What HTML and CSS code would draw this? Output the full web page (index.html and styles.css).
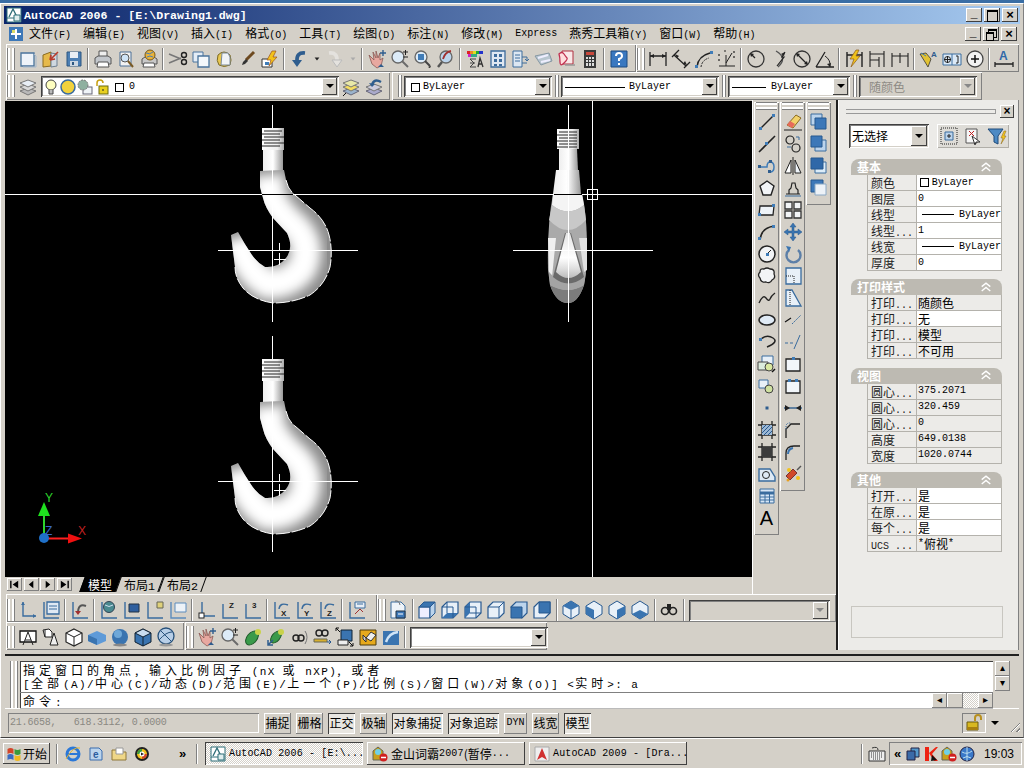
FILE: index.html
```html
<!DOCTYPE html>
<html lang="zh">
<head>
<meta charset="utf-8">
<title>AutoCAD 2006</title>
<link rel="stylesheet" href="styles.css">
</head>
<body>
<svg class="defs" width="0" height="0">
<defs>
<linearGradient id="thr" x1="0" y1="0" x2="1" y2="0"><stop offset="0" stop-color="#fff"/><stop offset=".7" stop-color="#eee"/><stop offset="1" stop-color="#aaa"/></linearGradient>
<linearGradient id="neck" x1="0" y1="0" x2="1" y2="0"><stop offset="0" stop-color="#eee"/><stop offset=".5" stop-color="#fff"/><stop offset="1" stop-color="#999"/></linearGradient>
<linearGradient id="tip" x1="0" y1="0" x2="0" y2="1"><stop offset="0" stop-color="#e4e4e4"/><stop offset=".55" stop-color="#fff"/><stop offset=".8" stop-color="#ddd"/><stop offset="1" stop-color="#bbb"/></linearGradient>
<filter id="bl" x="-30%" y="-30%" width="160%" height="160%"><feGaussianBlur stdDeviation="6"/></filter>
<filter id="bl2" x="-10%" y="-10%" width="120%" height="120%"><feGaussianBlur stdDeviation=".4"/></filter>
<clipPath id="hookclip"><path d="M260 171L284 170L286 180Q288 190 295 195L310 208Q325 219 329 235Q333 250 330 267Q325 285 310 295Q293 303 273 303Q253 300 243 288Q235 278 235 267L231 235L238 232Q244 243 250 252Q256 262 265 267Q278 268 286 258Q294 248 287 233L273 218Q265 207 263 198L260 187Z"/></clipPath>
<g id="hook">
<rect x="262" y="128" width="22" height="22" fill="url(#thr)"/>
<path d="M264 131h18M262 134h18M264 137h20M262 140h18M264 143h20M262 146h18" stroke="#222" stroke-width="1"/>
<rect x="263" y="150" width="20" height="21" fill="url(#neck)"/>
<g clip-path="url(#hookclip)">
<rect x="225" y="165" width="112" height="142" fill="#8c8c8c"/>
<path d="M268 175L270 197Q280 215 296 228Q312 246 302 268Q290 284 268 284Q246 272 238 238" fill="none" stroke="#fff" stroke-width="30" filter="url(#bl)"/>
</g>
<path d="M286 180Q288 190 295 195L310 208Q325 219 329 235Q333 250 330 267Q325 285 310 295Q293 303 273 303Q253 300 243 288Q235 278 235 267" fill="none" stroke="#fff" stroke-dasharray="14 2"/>
</g>
<g id="hookfront">
<rect x="557" y="129" width="22" height="20" fill="url(#thr)"/>
<path d="M559 132h18M557 135h20M559 138h18M557 141h20M559 144h18M557 147h20" stroke="#222"/>
<path d="M559 149L577 149L578 170L559 170Z" fill="url(#neck)"/>
<path d="M556 170H579L581 194H553Z" fill="url(#neck)"/>
<g filter="url(#bl2)">
<path d="M553 194H582Q587 215 587 250Q587 270 584 285Q578 303 568 303Q556 303 550 285L548 270Q547 225 553 194Z" fill="#aaa"/>
<path d="M552 205Q568 218 584 205L582 194H553Z" fill="#f4f4f4"/>
<path d="M549 220Q568 240 586 220L584 205Q568 218 552 205Z" fill="#c8c8c8"/>
<path d="M548 238L556 238L552 277L549 272Z" fill="#efefef"/>
<path d="M587 238L579 238L584 272L587 270Z" fill="#e2e2e2"/>
<path d="M550 285Q568 295 584 285Q578 303 568 303Q556 303 550 285Z" fill="#7c7c7c"/>
<path d="M549 272Q568 295 586 272L584 285Q568 295 550 285Z" fill="#a4a4a4"/>
</g>
<path d="M565 233H571L584 277Q568 290 553 277Z" fill="#6a6a6a"/>
<path d="M566 233H570L581 272Q568 284 556 272Z" fill="url(#tip)"/>
</g>
<symbol id="chev" viewBox="0 0 14 12"><path d="M2 5l5-4 5 4M2 10l5-4 5 4" fill="none" stroke="#fff" stroke-width="1.600"/></symbol>
<symbol id="new" viewBox="0 0 20 20"><path d="M3 4h13v13H3z" fill="#eef3f9" stroke="#49739c" stroke-width="1.3"/><path d="M16 5l2 2v11H5" fill="none" stroke="#a5b8cc"/></symbol>
<symbol id="open" viewBox="0 0 20 20"><path d="M2 6l8-3v14l-8 1z" fill="#e6b94a" stroke="#8a6a20"/><path d="M10 4l6 1v12l-6 1z" fill="#cfd8e0" stroke="#6d7f90"/><path d="M17 3l-8 8M9 11l1-5M9 11l5-1" stroke="#b83a2a" stroke-width="1.6" fill="none"/></symbol>
<symbol id="save" viewBox="0 0 20 20"><path d="M3 3h14v14H3z" fill="#4c7fb4" stroke="#2d5780"/><path d="M6 3h8v6H6z" fill="#e8eef5"/><path d="M6 12h8v5H6z" fill="#cdd7e2"/><path d="M8 13h2v3H8z" fill="#2d5780"/></symbol>
<symbol id="print" viewBox="0 0 20 20"><path d="M6 2h8v6H6z" fill="#eee" stroke="#555"/><path d="M2 9l3-2h10l3 2v6H2z" fill="#c3c7cc" stroke="#555"/><path d="M5 13h10l1 5H4z" fill="#fff" stroke="#555"/></symbol>
<symbol id="preview" viewBox="0 0 20 20"><path d="M4 3h11v14H4z" fill="#f2f2f2" stroke="#4a6f96"/><circle cx="9" cy="9" r="4" fill="#cfe4f7" stroke="#555"/><path d="M12 12l5 6" stroke="#7a5a25" stroke-width="2"/></symbol>
<symbol id="publish" viewBox="0 0 20 20"><path d="M3 10l3-2h9l3 2v5H3z" fill="#c8c8c8" stroke="#555"/><path d="M5 14h10l1 4H4z" fill="#fff" stroke="#555"/><circle cx="11" cy="6" r="5" fill="#e8b23a" stroke="#7c5a14"/><path d="M7 4q4 2 7-1M8 8q3-2 6 0" stroke="#4a7fb4" fill="none"/></symbol>
<symbol id="cut" viewBox="0 0 20 20"><path d="M1 5l12 5M1 14l12-5" stroke="#777" stroke-width="1.5"/><circle cx="16" cy="6" r="2.5" fill="none" stroke="#222" stroke-width="1.4"/><circle cx="16" cy="13" r="2.5" fill="none" stroke="#222" stroke-width="1.4"/></symbol>
<symbol id="copy" viewBox="0 0 20 20"><path d="M2 3h10v10H2z" fill="#e4edf6" stroke="#49739c"/><path d="M7 7h11v11H7z" fill="#f4f8fb" stroke="#49739c" stroke-width="1.3"/></symbol>
<symbol id="paste" viewBox="0 0 20 20"><path d="M4 6q-2 6 1 10q5 3 11 0q2-5 0-10q-6-6-12 0z" fill="#e9c74f" stroke="#7b6a28"/><path d="M8 4h6l2 4v8H7z" fill="#f1f4f7" stroke="#7a8a9a"/></symbol>
<symbol id="brush" viewBox="0 0 20 20"><path d="M17 3L9 11" stroke="#6e4a20" stroke-width="3"/><path d="M9 10q-3 2-4 6q4-1 6-4z" fill="#333"/></symbol>
<symbol id="match" viewBox="0 0 20 20"><path d="M2 10h10v8H2z" fill="#fff" stroke="#333"/><path d="M5 13h4v3H5z" fill="#3f7cb8"/><path d="M12 2L7 11h4l-2 6 8-9h-4l3-6z" fill="#f2c21c" stroke="#9a5020" stroke-width=".7"/></symbol>
<symbol id="undo" viewBox="0 0 20 20"><path d="M16 4Q7 3 8 13" fill="none" stroke="#2f5d8e" stroke-width="3.6"/><path d="M3 11l5 7 5-7z" fill="#2f5d8e"/></symbol>
<symbol id="redo" viewBox="0 0 20 20"><path d="M4 4Q13 3 12 13" fill="none" stroke="#e4e2de" stroke-width="3.6"/><path d="M7 11l5 7 5-7z" fill="#e4e2de" stroke="#bbb"/></symbol>
<symbol id="down" viewBox="0 0 20 20"><path d="M7 8h6l-3 4z" fill="#222"/></symbol>
<symbol id="downg" viewBox="0 0 20 20"><path d="M7 8h6l-3 4z" fill="#aaa"/></symbol>
<symbol id="pan" viewBox="0 0 20 20"><path d="M2 6l5 5-1-8 3 6V2l2 7 2-5v7l3-2-2 8-4 2-5-4z" fill="#e8a8a0" stroke="#8a5a55" stroke-width=".8"/><path d="M13 4h6M16 1v6" stroke="#2f5d8e" stroke-width="1.4"/><path d="M11 18l3-3 3 3z" fill="#2f5d8e"/></symbol>
<symbol id="zrt" viewBox="0 0 20 20"><circle cx="8" cy="8" r="6" fill="#dcebf8" stroke="#666" stroke-width="1.3"/><path d="M12 12l6 6" stroke="#6b6b6b" stroke-width="2"/><path d="M13 3h5M15.5 1v5M13 8h5" stroke="#222"/></symbol>
<symbol id="zw" viewBox="0 0 20 20"><circle cx="8" cy="8" r="6" fill="#dcebf8" stroke="#666" stroke-width="1.3"/><rect x="5" y="5" width="6" height="6" fill="#3f7cb8"/><path d="M12 12l5 5" stroke="#444" stroke-width="2"/><path d="M15 18l3-1-1 2z" fill="#111"/></symbol>
<symbol id="zp" viewBox="0 0 20 20"><circle cx="10" cy="8" r="6" fill="#bcd4ec" stroke="#666" stroke-width="1.3"/><path d="M15 2Q9 3 7 10" stroke="#a03030" stroke-width="1.8" fill="none"/><path d="M6 13l-4 5" stroke="#555" stroke-width="2.4"/></symbol>
<symbol id="col" viewBox="0 0 20 20"><path d="M2 2h3v3H2z" fill="#d22"/><path d="M5 2h3v3H5z" fill="#e82"/><path d="M8 2h3v3H8z" fill="#dd2"/><path d="M11 2h3v3h-3z" fill="#2a3"/><path d="M14 2h4v3h-4z" fill="#23c"/><path d="M3 5h3v3H3z" fill="#c2c"/><path d="M6 5h3v3H6zM9 5h3v3H9z" fill="#3a8"/><path d="M5 10h6M5 14h5M5 18h6M5 10l4 4-4 4" stroke="#444" fill="none"/><path d="M13 18l2-9 3 9M14 15h3" stroke="#333" fill="none" stroke-width="1.3"/></symbol>
<symbol id="grd" viewBox="0 0 20 20"><path d="M3 2h14v16H3z" fill="#dfe8f2" stroke="#3d6c9c" stroke-width="1.3"/><path d="M6 5h3v3H6zM11 5h3v3h-3zM6 10h3v3H6zM11 10h3v3h-3zM6 15h3v2H6zM11 15h3v2h-3z" fill="#3d6c9c"/></symbol>
<symbol id="dc" viewBox="0 0 20 20"><path d="M2 2h9v16H2z" fill="#dce7f2" stroke="#3d6c9c"/><path d="M4 6h5M4 9h5M4 12h5" stroke="#3d6c9c"/><path d="M11 8h5v4M16 12l-2-2M16 12l2-2M11 14h5" stroke="#3d6c9c" fill="none"/></symbol>
<symbol id="tool" viewBox="0 0 20 20"><path d="M1 7l6 9 11-4-3-8z" fill="#b8c6d0" stroke="#8798a4"/><path d="M4 9l10-3M7 13l9-2" stroke="#eef" stroke-width="2"/></symbol>
<symbol id="sheet" viewBox="0 0 20 20"><path d="M5 2h11v13H5z" fill="#f8e8e8" stroke="#b03040"/><path d="M2 5q3-3 5 0t3 4-3 5-4-1-1-8z" fill="#fdd" stroke="#c03050" stroke-width="1.3"/><path d="M8 16h10" stroke="#999" stroke-width="1.5"/></symbol>
<symbol id="calc" viewBox="0 0 20 20"><path d="M4 1h12v18H4z" fill="#3a3a3a"/><path d="M6 3h8v3H6z" fill="#c9483c"/><path d="M6 8h2v2H6zM9 8h2v2H9zM12 8h2v2h-2zM6 11h2v2H6zM9 11h2v2H9zM12 11h2v2h-2zM6 14h2v3H6zM9 14h2v3H9zM12 14h2v3h-2z" fill="#ddd"/></symbol>
<symbol id="help" viewBox="0 0 20 20"><path d="M2 2h16v16H2z" fill="#3a78c0" stroke="#1d4a80"/><path d="M7 7q0-3 3-3t3 3q0 2-3 3v2" fill="none" stroke="#fff" stroke-width="2"/><path d="M9 14h2v2H9z" fill="#fff"/></symbol>
<symbol id="dl" viewBox="0 0 20 20"><path d="M2 3v14M18 3v14M2 7h16" stroke="#222" stroke-width="1.3" fill="none"/><path d="M2 7l4-2v4zM18 7l-4-2v4z" fill="#222"/></symbol>
<symbol id="da" viewBox="0 0 20 20"><path d="M1 8L8 1M13 19l6-6M3 6l12 11" stroke="#222" stroke-width="1.3"/><path d="M4 5l2 4 2-2zM16 16l-4-1 2-3z" fill="#222"/></symbol>
<symbol id="darc" viewBox="0 0 20 20"><path d="M3 18Q4 7 16 4" fill="none" stroke="#222" stroke-width="1.4"/><path d="M7 18Q8 11 15 9" fill="none" stroke="#2a2a2a" stroke-dasharray="2 1"/><rect x="1" y="16" width="3" height="3" fill="#3f7cb8"/><rect x="16" y="2" width="3" height="3" fill="#3f7cb8"/></symbol>
<symbol id="dord" viewBox="0 0 20 20"><path d="M2 17h16M9 6v11M15 4l-6 10" stroke="#222" fill="none"/><path d="M2 5v2M2 10v2M17 2v2M17 7v2M7 2h2" stroke="#222" stroke-width="1.2"/></symbol>
<symbol id="drad" viewBox="0 0 20 20"><circle cx="10" cy="10" r="8" fill="none" stroke="#333" stroke-width="1.3"/><path d="M9 9L5 5" stroke="#222" stroke-width="1.3"/><path d="M4 4l4 1-3 3z" fill="#222"/></symbol>
<symbol id="djog" viewBox="0 0 20 20"><path d="M7 2Q19 9 9 18" fill="none" stroke="#555" stroke-width="1.3"/><path d="M16 3l-3 5h2l-7 9" stroke="#222" fill="none" stroke-width="1.2"/><path d="M16 3l-1 4-3-2z" fill="#222"/></symbol>
<symbol id="ddia" viewBox="0 0 20 20"><circle cx="10" cy="10" r="8" fill="none" stroke="#333" stroke-width="1.3"/><path d="M5 5l10 10" stroke="#222" stroke-width="1.3"/><path d="M4 4l4 1-3 3zM16 16l-4-1 3-3z" fill="#222"/></symbol>
<symbol id="dang" viewBox="0 0 20 20"><path d="M1 18h18M1 18L10 3" stroke="#222" stroke-width="1.3"/><path d="M10 7Q16 11 15 18" fill="none" stroke="#222"/><path d="M15 18l-3-3 4-1z" fill="#222"/></symbol>
<symbol id="dq" viewBox="0 0 20 20"><path d="M3 3v15M18 3v15M3 6h15" stroke="#222" stroke-width="1.4"/><path d="M12 1L6 10h4l-3 8 9-11h-4l3-6z" fill="#efc21c" stroke="#8d5a1e" stroke-width=".7"/></symbol>
<symbol id="dbase" viewBox="0 0 20 20"><path d="M3 2v16M17 2v16M12 8v10M3 5h14M3 11h9" stroke="#222" fill="none" stroke-width="1.1"/></symbol>
<symbol id="dcon" viewBox="0 0 20 20"><path d="M2 4v14M10 4v10M18 4v14M2 7h16" stroke="#222" fill="none" stroke-width="1.1"/></symbol>
<symbol id="lead" viewBox="0 0 20 20"><path d="M1 5l5 8 3 5 3-8-5-6z" fill="#e2c233" stroke="#333" stroke-width=".8"/><path d="M2 4l5 3" stroke="#3f7cb8"/><text x="12" y="8" font-size="8" font-family="Liberation Sans" font-weight="700" fill="#2f5d8e">A</text></symbol>
<symbol id="tol" viewBox="0 0 20 20"><path d="M1 5h18v11H1z" fill="#dbe9f6" stroke="#3a6c9e"/><path d="M10 5v11" stroke="#3a6c9e"/><circle cx="5.5" cy="10.500" r="3" fill="none" stroke="#222"/><path d="M5.500 7v7M2 10.500h7" stroke="#222"/><path d="M14 7h2v7h-2" fill="none" stroke="#222"/></symbol>
<symbol id="center" viewBox="0 0 20 20"><circle cx="10" cy="10" r="8" fill="#f2f2f2" stroke="#444" stroke-width="1.3"/><path d="M10 6v8M6 10h8" stroke="#111" stroke-width="1.5"/></symbol>
<symbol id="dstyle" viewBox="0 0 20 20"><path d="M1 18V13M19 18v-5M1 15h18" stroke="#222" stroke-width="1.3"/><text x="5" y="11" font-size="12" font-family="Liberation Sans" font-weight="700" fill="#3068a8">A</text></symbol>
<symbol id="layers" viewBox="0 0 20 20"><path d="M10 11l8 3-8 4-8-4z" fill="#b9b9b9" stroke="#777"/><path d="M10 7l8 3-8 4-8-4z" fill="#d9d9d9" stroke="#777"/><path d="M10 3l8 3-8 4-8-4z" fill="#e8eef5" stroke="#777"/></symbol>
<symbol id="bulb" viewBox="0 0 14 16"><circle cx="7" cy="6" r="5" fill="#ffffc0" stroke="#444"/><path d="M5 11v4h4v-4" fill="#bbb" stroke="#444"/></symbol>
<symbol id="sun" viewBox="0 0 16 16"><circle cx="8" cy="8" r="7" fill="#f2d23c" stroke="#3a6c9e" stroke-width="1.5"/></symbol>
<symbol id="gear" viewBox="0 0 16 16"><rect x="6" y="8" width="9" height="7" fill="#f0f4f8" stroke="#667"/><circle cx="6" cy="6" r="5" fill="#8fb0a0" stroke="#777" stroke-dasharray="2 1"/></symbol>
<symbol id="lock" viewBox="0 0 16 16"><path d="M3 7V4q0-3 3-3t3 3" fill="none" stroke="#c8a010" stroke-width="1.5"/><rect x="5" y="7" width="9" height="8" fill="#e8d020" stroke="#6a6a10"/><path d="M9 10v2" stroke="#222"/></symbol>
<symbol id="layprev" viewBox="0 0 20 20"><path d="M10 11l8 3-8 4-8-4z" fill="#9ab3cc" stroke="#667"/><path d="M10 7l8 3-8 4-8-4z" fill="#f4dc60" stroke="#777"/><path d="M10 3l8 3-8 4-8-4z" fill="#e8e8a8" stroke="#777"/><path d="M2 19l3-3" stroke="#111"/></symbol>
<symbol id="layun" viewBox="0 0 20 20"><path d="M10 11l8 3-8 4-8-4z" fill="#aac" stroke="#667"/><path d="M10 7l8 3-8 4-8-4z" fill="#ccd" stroke="#777"/><path d="M17 5Q10 1 8 8" fill="none" stroke="#2f5d8e" stroke-width="2.5"/><path d="M5 6l3 4 3-3z" fill="#2f5d8e"/></symbol>
<symbol id="u1" viewBox="0 0 20 20"><path d="M5 2v14h13" fill="none" stroke="#3a6c9e" stroke-width="1.4"/><path d="M3 5l2-3 2 3zM15 14l3 2-3 2z" fill="#3a6c9e"/></symbol>
<symbol id="u2" viewBox="0 0 20 20"><path d="M3 2v16h15" fill="none" stroke="#3a6c9e" stroke-width="1.4"/><path d="M6 2h12v12H6z" fill="#dfe9f4" stroke="#3a6c9e" stroke-width="1.3"/><path d="M8 6h8M8 9h8" stroke="#3a6c9e"/></symbol>
<symbol id="u3" viewBox="0 0 20 20"><path d="M3 2v16h15" fill="none" stroke="#3a6c9e" stroke-width="1.4"/><path d="M16 6Q8 3 8 13" stroke="#555" fill="none" stroke-width="2"/><path d="M5 11l3 4 3-4z" fill="#a03030"/></symbol>
<symbol id="u4" viewBox="0 0 20 20"><path d="M3 2v16h15" fill="none" stroke="#3a6c9e" stroke-width="1.4"/><circle cx="10" cy="7" r="5.500" fill="#4a8a90" stroke="#345"/><path d="M6 5q4 3 8 0" stroke="#cde" fill="none"/></symbol>
<symbol id="u5" viewBox="0 0 20 20"><path d="M3 2v16h15" fill="none" stroke="#3a6c9e" stroke-width="1.4"/><path d="M7 4h10v8H7z" fill="#2f5f9e" stroke="#234"/></symbol>
<symbol id="u6" viewBox="0 0 20 20"><path d="M3 2v16h15" fill="none" stroke="#3a6c9e" stroke-width="1.4"/><path d="M12 2h6v6h-6z" fill="#dfd17a" stroke="#665"/></symbol>
<symbol id="u7" viewBox="0 0 20 20"><path d="M3 2v16h15" fill="none" stroke="#5c8cbc" stroke-width="1.4"/><path d="M7 3h11v9H7z" fill="#edf2f7" stroke="#5c8cbc"/></symbol>
<symbol id="u8" viewBox="0 0 20 20"><path d="M5 2v14h13" fill="none" stroke="#3a6c9e" stroke-width="1.4"/><rect x="2" y="13" width="5" height="5" fill="#fff" stroke="#222"/></symbol>
<symbol id="u9" viewBox="0 0 20 20"><path d="M3 4v14h15" fill="none" stroke="#3a6c9e" stroke-width="1.4"/><text x="9" y="8" font-size="8" font-family="Liberation Sans" font-weight="700" fill="#222">Z</text></symbol>
<symbol id="u10" viewBox="0 0 20 20"><path d="M3 4v14h15" fill="none" stroke="#3a6c9e" stroke-width="1.4"/><text x="9" y="8" font-size="8" font-family="Liberation Sans" font-weight="700" fill="#222">3</text></symbol>
<symbol id="ux" viewBox="0 0 20 20"><path d="M3 2v16h15" fill="none" stroke="#3a6c9e" stroke-width="1.4"/><path d="M16 5Q8 2 7 9" stroke="#3a6c9e" fill="none" stroke-width="1.4"/><text x="9" y="16" font-size="8" font-family="Liberation Sans" font-weight="700" fill="#222">X</text></symbol>
<symbol id="uy" viewBox="0 0 20 20"><path d="M3 2v16h15" fill="none" stroke="#3a6c9e" stroke-width="1.4"/><path d="M16 5Q8 2 7 9" stroke="#3a6c9e" fill="none" stroke-width="1.4"/><text x="9" y="16" font-size="8" font-family="Liberation Sans" font-weight="700" fill="#222">Y</text></symbol>
<symbol id="uz" viewBox="0 0 20 20"><path d="M3 2v16h15" fill="none" stroke="#3a6c9e" stroke-width="1.4"/><path d="M16 5Q8 2 7 9" stroke="#3a6c9e" fill="none" stroke-width="1.4"/><text x="9" y="16" font-size="8" font-family="Liberation Sans" font-weight="700" fill="#222">Z</text></symbol>
<symbol id="umgr" viewBox="0 0 20 20"><path d="M3 2v16h15" fill="none" stroke="#3a6c9e" stroke-width="1.4"/><path d="M8 2h10v6H8z" fill="#e8eef5" stroke="#3a6c9e"/><path d="M10 4h6" stroke="#3a6c9e"/><path d="M8 14l5-5 3 3" stroke="#a03030" fill="none"/></symbol>
<symbol id="vmgr" viewBox="0 0 20 20"><path d="M3 2h10l4 4v12H3z" fill="#eef3f8" stroke="#3a6c9e"/><path d="M7 1q4-1 5 4" stroke="#777" fill="none"/><path d="M8 11h9v7H8z" fill="#3d78b8" stroke="#234"/><path d="M10 14h5" stroke="#fff"/></symbol>
<symbol id="vtop" viewBox="0 0 20 20"><path d="M2 7h11v11H2z" fill="#eef" stroke="#27588f" stroke-width="1.2"/><path d="M2 7l5-5h11l-5 5z" fill="#3a74b0" stroke="#27588f"/><path d="M13 7l5-5v11l-5 5z" fill="#bcd4ec" stroke="#27588f"/></symbol>
<symbol id="vbot" viewBox="0 0 20 20"><path d="M2 7l5-5h11v11l-5 5H2z" fill="#e8f0f8" stroke="#27588f" stroke-width="1.2"/><path d="M2 18l5-5h11l-5 5z" fill="#3a74b0"/><path d="M7 2v11" stroke="#27588f"/><path d="M2 7h11v11" stroke="#27588f" fill="none"/></symbol>
<symbol id="vl" viewBox="0 0 20 20"><path d="M2 7l5-5h11v11l-5 5H2z" fill="#e8f0f8" stroke="#27588f" stroke-width="1.2"/><path d="M2 7l5-5v11l-5 5z" fill="#3a74b0"/><path d="M7 13h11M2 7h11v11" stroke="#27588f" fill="none"/></symbol>
<symbol id="vr" viewBox="0 0 20 20"><path d="M2 7l5-5h11v11l-5 5H2z" fill="#e8f0f8" stroke="#27588f" stroke-width="1.2"/><path d="M2 7h11v11M13 7l5-5" stroke="#27588f" fill="none"/></symbol>
<symbol id="vf" viewBox="0 0 20 20"><path d="M2 7l5-5h11v11l-5 5z" fill="#bcd4ec" stroke="#27588f" stroke-width="1.2"/><path d="M2 7h11v11H2z" fill="#3a74b0" stroke="#27588f"/></symbol>
<symbol id="vk" viewBox="0 0 20 20"><path d="M2 7l5-5h11v11l-5 5H2z" fill="#e8f0f8" stroke="#27588f" stroke-width="1.2"/><path d="M7 2h11v11H7z" fill="#3a74b0" stroke="#27588f"/></symbol>
<symbol id="v3d" viewBox="0 0 20 20"><path d="M10 1l8 5v8l-8 5-8-5V6z" fill="#e8f0f8" stroke="#27588f"/><path d="M10 10l8-4-8-5-8 5z" fill="#3a74b0"/><path d="M10 10v9" stroke="#27588f"/></symbol>
<symbol id="v3e" viewBox="0 0 20 20"><path d="M10 1l8 5v8l-8 5-8-5V6z" fill="#e8f0f8" stroke="#27588f"/><path d="M2 6l8 4v9l-8-5z" fill="#3a74b0"/></symbol>
<symbol id="v3f" viewBox="0 0 20 20"><path d="M10 1l8 5v8l-8 5-8-5V6z" fill="#e8f0f8" stroke="#27588f"/><path d="M18 6l-8 4v9l8-5z" fill="#3a74b0"/></symbol>
<symbol id="v3g" viewBox="0 0 20 20"><path d="M10 1l8 5v8l-8 5-8-5V6z" fill="#e8f0f8" stroke="#27588f"/><path d="M2 14l8-4 8 4-8 5z" fill="#3a74b0"/></symbol>
<symbol id="cam" viewBox="0 0 20 20"><circle cx="6" cy="11" r="3.500" fill="none" stroke="#222" stroke-width="1.600"/><circle cx="14" cy="11" r="3.500" fill="none" stroke="#222" stroke-width="1.600"/><path d="M8 4h4v6H8z" fill="#222"/></symbol>
<symbol id="hide" viewBox="0 0 20 20"><path d="M2 4h16v11H2z" fill="#fff" stroke="#111" stroke-width="1.300"/><path d="M5 18l5-13 5 13M7 13h6" fill="none" stroke="#222"/></symbol>
<symbol id="sh2" viewBox="0 0 20 20"><path d="M2 3l6-1 3 3v5H4z" fill="#fff" stroke="#222"/><path d="M4 3v7" stroke="#222"/><path d="M9 18l4-12 4 12z" fill="#eee" stroke="#222"/></symbol>
<symbol id="sh3" viewBox="0 0 20 20"><path d="M10 2l8 4v9l-8 4-8-4V6z" fill="#fff" stroke="#222" stroke-width="1.200"/><path d="M2 6l8 4 8-4M10 10v9" stroke="#222" fill="none"/></symbol>
<symbol id="sh4" viewBox="0 0 20 20"><path d="M10 4l9 4v6l-9 4-9-4V8z" fill="#5e9ad8"/><path d="M1 8l9 4v6l-9-4z" fill="#3a74b0"/></symbol>
<symbol id="sh5" viewBox="0 0 20 20"><circle cx="10" cy="10" r="8" fill="#3a74b0"/><circle cx="8" cy="7" r="4" fill="#6fa8d8"/><ellipse cx="10" cy="18" rx="7" ry="1.500" fill="#888"/></symbol>
<symbol id="sh6" viewBox="0 0 20 20"><path d="M10 2l8 4v9l-8 4-8-4V6z" fill="#3a74b0" stroke="#123"/><path d="M2 6l8 4 8-4-8-4z" fill="#c9ddf0" stroke="#123"/><path d="M10 10v9" stroke="#123"/></symbol>
<symbol id="sh7" viewBox="0 0 20 20"><circle cx="10" cy="9" r="8" fill="#b8cfe8" stroke="#26507a" stroke-width="1.300"/><path d="M5 4l11 11M3 13q7-8 13-8" stroke="#26507a" fill="none"/><ellipse cx="10" cy="18" rx="7" ry="1.500" fill="#999"/></symbol>
<symbol id="orb1" viewBox="0 0 20 20"><ellipse cx="9" cy="11" rx="5" ry="8" transform="rotate(40 9 11)" fill="#3a9a4a" stroke="#1f5a2a"/><circle cx="15" cy="5" r="3" fill="#c9d24a"/></symbol>
<symbol id="orb2" viewBox="0 0 20 20"><ellipse cx="10" cy="10" rx="4" ry="7" transform="rotate(40 10 10)" fill="#3a9a4a" stroke="#1f5a2a"/><circle cx="15" cy="5" r="3" fill="#c9d24a"/><path d="M2 18l5-5M2 13v5h5" stroke="#2f5d8e" stroke-width="1.500" fill="none"/></symbol>
<symbol id="cam2" viewBox="0 0 20 20"><circle cx="7" cy="11" r="3" fill="none" stroke="#222" stroke-width="1.400"/><circle cx="12" cy="11" r="3" fill="none" stroke="#222" stroke-width="1.400"/><path d="M16 4q4 6 0 13" stroke="#777" fill="none"/></symbol>
<symbol id="cam3" viewBox="0 0 20 20"><circle cx="7" cy="6" r="3" fill="none" stroke="#222" stroke-width="1.400"/><circle cx="13" cy="6" r="3" fill="none" stroke="#222" stroke-width="1.400"/><path d="M2 12h13v3H2z" fill="#d8b02e" stroke="#665"/><path d="M15 15h4M17 13l2 2-2 2" stroke="#27588f" fill="none"/></symbol>
<symbol id="sw" viewBox="0 0 20 20"><path d="M6 3h11v11H6z" fill="#3a74b0" stroke="#123"/><path d="M3 13h10v5H3z" fill="#eee" stroke="#222"/><path d="M1 1l4 4M1 1h3M1 1v3M18 19l-4-4M18 19v-3M18 19h-3" stroke="#111" fill="none"/></symbol>
<symbol id="erase" viewBox="0 0 20 20"><path d="M2 3h16v15H2z" fill="#e6a91c" stroke="#4a3a10"/><path d="M8 11l5-6 5 3-5 6z" fill="#eee" stroke="#333"/><path d="M5 8l3 3v4l-3-3z" fill="#cfcfcf" stroke="#333"/></symbol>
<symbol id="surf" viewBox="0 0 20 20"><path d="M2 4h16v14H2z" fill="#3a74b0"/><path d="M5 15q3-9 12-10" stroke="#cfe4f7" stroke-width="2.500" fill="none"/></symbol>
<symbol id="vline" viewBox="0 0 20 20"><path d="M4 16L16 4" stroke="#222" stroke-width="1.400"/><rect x="2" y="15" width="3" height="3" fill="#3f7cb8"/><rect x="15" y="2" width="3" height="3" fill="#3f7cb8"/></symbol>
<symbol id="vxline" viewBox="0 0 20 20"><path d="M2 18L18 2" stroke="#222" stroke-width="1.600"/><rect x="8" y="8" width="3" height="3" fill="#3f7cb8"/></symbol>
<symbol id="vpl" viewBox="0 0 20 20"><path d="M2 11h8Q10 6 13 6q4 0 4 5t-4 5" fill="none" stroke="#3f7cb8" stroke-width="1.500"/><rect x="1" y="9" width="3" height="3" fill="#2f5d8e"/><rect x="12" y="4" width="3" height="3" fill="#2f5d8e"/><rect x="11" y="14" width="3" height="3" fill="#2f5d8e"/></symbol>
<symbol id="vpoly" viewBox="0 0 20 20"><path d="M10 3l7 5-3 9H6L3 8z" fill="#f2f4f6" stroke="#222" stroke-width="1.400"/></symbol>
<symbol id="vrect" viewBox="0 0 20 20"><path d="M3 6h14l-1 9H2z" fill="#eef3f8" stroke="#222" stroke-width="1.300"/><rect x="1" y="13" width="3" height="3" fill="#3f7cb8"/><rect x="15" y="4" width="3" height="3" fill="#3f7cb8"/></symbol>
<symbol id="varc" viewBox="0 0 20 20"><path d="M3 18Q4 6 17 4" fill="none" stroke="#222" stroke-width="1.500"/><rect x="1" y="15" width="3" height="3" fill="#3f7cb8"/><rect x="15" y="3" width="3" height="3" fill="#3f7cb8"/></symbol>
<symbol id="vcir" viewBox="0 0 20 20"><circle cx="10" cy="10" r="8" fill="#f2f4f6" stroke="#222" stroke-width="1.500"/><path d="M10 10l4-4" stroke="#222"/><rect x="9" y="9" width="3" height="3" fill="#3f7cb8"/></symbol>
<symbol id="vrev" viewBox="0 0 20 20"><path d="M7 3q3-2 6 0 5 0 4 5 2 4-2 6-2 4-6 2-5 1-6-4-3-3 0-6 0-4 4-3z" fill="#f2f4f6" stroke="#222" stroke-width="1.300"/></symbol>
<symbol id="vspl" viewBox="0 0 20 20"><path d="M2 15Q6 6 9 10T13 11 18 5" fill="none" stroke="#222" stroke-width="1.300"/></symbol>
<symbol id="vell" viewBox="0 0 20 20"><ellipse cx="10" cy="10" rx="8" ry="5" fill="#dfeaf5" stroke="#222" stroke-width="1.600"/></symbol>
<symbol id="vella" viewBox="0 0 20 20"><path d="M4 7Q10 2 16 6T10 15" fill="none" stroke="#222" stroke-width="1.500"/><rect x="2" y="6" width="3" height="3" fill="#3f7cb8"/></symbol>
<symbol id="vins" viewBox="0 0 20 20"><path d="M5 2h11v9H5z" fill="#e8f0f8" stroke="#3a6c9e"/><path d="M1 8h10v8H1z" fill="#dcecdc" stroke="#444"/><circle cx="12" cy="13" r="4" fill="#d9e8a0" stroke="#444"/><path d="M15 18l3-3" stroke="#111" stroke-width="1.500"/></symbol>
<symbol id="vblk" viewBox="0 0 20 20"><path d="M2 4h9v8H2z" fill="#e8f0f8" stroke="#3a6c9e"/><circle cx="12" cy="13" r="4" fill="#cfe0a0" stroke="#444"/></symbol>
<symbol id="vpt" viewBox="0 0 20 20"><rect x="8.500" y="8.500" width="3" height="3" fill="#2f5d8e"/></symbol>
<symbol id="vhat" viewBox="0 0 20 20"><path d="M5 1v18M15 1v18M1 5h18M1 15h18" stroke="#222" stroke-width="1.300"/><path d="M5 5h10v10H5z" fill="#9bb7d4"/><path d="M5 9l4-4M5 13l8-8M7 15l8-8M11 15l4-4" stroke="#27588f"/></symbol>
<symbol id="vgrd" viewBox="0 0 20 20"><path d="M5 1v18M15 1v18M1 5h18M1 15h18" stroke="#222" stroke-width="1.300"/><path d="M5 5h10v10H5z" fill="#3c3c3c"/></symbol>
<symbol id="vreg" viewBox="0 0 20 20"><path d="M2 5h11l5 8v4H2z" fill="#dfeaf5" stroke="#3a6c9e" stroke-width="1.400"/><circle cx="9" cy="11" r="3.500" fill="none" stroke="#222"/></symbol>
<symbol id="vtbl" viewBox="0 0 20 20"><path d="M3 3h14v14H3z" fill="#d7e6f5" stroke="#3a6c9e"/><path d="M3 7h14" stroke="#3a6c9e" stroke-width="3"/><path d="M3 11h14M3 14h14M8 7v10M12.500 7v10" stroke="#3a6c9e"/></symbol>
<symbol id="verase" viewBox="0 0 20 20"><path d="M1 18h18" stroke="#222"/><path d="M4 13l9-10 5 3-8 10z" fill="#f2d26a" stroke="#8a6a20"/><path d="M4 13l3-4 5 3-3 4z" fill="#e86a5a"/></symbol>
<symbol id="vcopy" viewBox="0 0 20 20"><circle cx="7" cy="6" r="4" fill="none" stroke="#222" stroke-width="1.200"/><circle cx="13" cy="14" r="4" fill="none" stroke="#222" stroke-width="1.200"/><path d="M4 13h4M13 3h3v3" stroke="#3a6c9e" fill="none"/></symbol>
<symbol id="vmir" viewBox="0 0 20 20"><path d="M10 1v18" stroke="#222"/><path d="M8 4v13H2z" fill="#fff" stroke="#222"/><path d="M12 4v13h6z" fill="#eef3f8" stroke="#222"/></symbol>
<symbol id="voff" viewBox="0 0 20 20"><path d="M3 16h14M6 16v-4l2-2 1-5h3l1 5 2 2v4" fill="none" stroke="#222" stroke-width="1.200"/><path d="M2 18h16" stroke="#3a6c9e"/></symbol>
<symbol id="varr" viewBox="0 0 20 20"><path d="M2 2h7v7H2zM11 2h7v7h-7zM2 11h7v7H2zM11 11h7v7h-7z" fill="#f2f4f6" stroke="#333" stroke-width="1.300"/></symbol>
<symbol id="vmov" viewBox="0 0 20 20"><path d="M10 1l3 4h-2v4h4V7l4 3-4 3v-2h-4v4h2l-3 4-3-4h2v-4H5v2l-4-3 4-3v2h4V5H7z" fill="#3a74b0" stroke="#27588f" stroke-width=".5"/></symbol>
<symbol id="vrot" viewBox="0 0 20 20"><path d="M6 6a7 7 0 1 0 9 0" fill="none" stroke="#5c7fa8" stroke-width="2.400"/><path d="M3 2l5 1-2 5z" fill="#3a74b0"/></symbol>
<symbol id="vscl" viewBox="0 0 20 20"><path d="M3 2h15v16H3z" fill="#e8f0f8" stroke="#3a6c9e" stroke-width="1.300"/><path d="M3 10h8v8" fill="none" stroke="#222" stroke-dasharray="1 1"/></symbol>
<symbol id="vstr" viewBox="0 0 20 20"><path d="M3 2h6l9 16H3z" fill="#e8f0f8" stroke="#3a6c9e" stroke-width="1.300"/><path d="M7 2v16" stroke="#222" stroke-dasharray="1 1"/></symbol>
<symbol id="vtrm" viewBox="0 0 20 20"><path d="M2 12l6-4" stroke="#111" stroke-width="1.100"/><path d="M9 14l9-9" stroke="#3a6c9e" stroke-dasharray="2 1"/></symbol>
<symbol id="vext" viewBox="0 0 20 20"><path d="M2 11h3M7 11h3M11 17l6-14" stroke="#3a6c9e" fill="none"/></symbol>
<symbol id="vbrk" viewBox="0 0 20 20"><path d="M3 5h14v12H3z" fill="#f2f6fa" stroke="#222" stroke-width="1.300"/><rect x="9" y="3" width="3" height="3" fill="#3f7cb8"/></symbol>
<symbol id="vbr2" viewBox="0 0 20 20"><path d="M3 5h14v12H3z" fill="#f2f6fa" stroke="#222" stroke-width="1.300"/><rect x="5" y="3" width="3" height="3" fill="#3f7cb8"/><rect x="12" y="3" width="3" height="3" fill="#3f7cb8"/></symbol>
<symbol id="vjoin" viewBox="0 0 20 20"><path d="M1 10h18" stroke="#2f5d8e" stroke-width="1.400"/><path d="M2 7l5 3-5 3zM18 7l-5 3 5 3z" fill="#222"/></symbol>
<symbol id="vcha" viewBox="0 0 20 20"><path d="M3 18V9l5-5h9" fill="none" stroke="#222" stroke-width="1.300"/><path d="M3 9V5l2-2h3" stroke="#3a6c9e" stroke-dasharray="1 1" fill="none"/></symbol>
<symbol id="vfil" viewBox="0 0 20 20"><path d="M3 18V11Q3 4 11 4h6" fill="none" stroke="#222" stroke-width="1.300"/><path d="M5 12Q5 7 10 6" stroke="#3a74b0" fill="none" stroke-width="2"/></symbol>
<symbol id="vexp" viewBox="0 0 20 20"><path d="M3 12l7-7 4 4-7 7z" fill="#d04a2a" stroke="#733"/><path d="M14 6l4-4" stroke="#555" stroke-width="1.500"/><circle cx="6" cy="6" r="2" fill="#f2c21c"/><circle cx="15" cy="14" r="2" fill="#f2c21c"/><circle cx="5" cy="16" r="1.500" fill="#e8a020"/></symbol>
<symbol id="d1" viewBox="0 0 20 20"><path d="M2 2h11v11H2z" fill="#bcd4ec" stroke="#3a6c9e"/><path d="M6 6h11v11H6z" fill="#3d78b8" stroke="#27588f"/></symbol>
<symbol id="d2" viewBox="0 0 20 20"><path d="M6 6h11v11H6z" fill="#bcd4ec" stroke="#3a6c9e"/><path d="M2 2h11v11H2z" fill="#3d78b8" stroke="#27588f"/></symbol>
<symbol id="d3" viewBox="0 0 20 20"><path d="M6 6h11v11H6z" fill="#dcecf8" stroke="#3a6c9e"/><path d="M2 2h12v11H2z" fill="#2f68a8" stroke="#27588f"/></symbol>
<symbol id="d4" viewBox="0 0 20 20"><path d="M2 2h12v12H2z" fill="#3d78b8" stroke="#27588f"/><path d="M6 6h11v11H6z" fill="#edf2f7" stroke="#8aa8c4"/></symbol>
<symbol id="psel" viewBox="0 0 20 20"><path d="M2 2h16v16H2z" fill="none" stroke="#222" stroke-dasharray="1 1"/><path d="M6 6h8v8H6z" fill="#bcd4ec" stroke="#3a6c9e"/><path d="M8 10h4M10 8v4" stroke="#222"/></symbol>
<symbol id="pcur" viewBox="0 0 20 20"><path d="M3 3h11v14H3z" fill="#f6f6f6" stroke="#555"/><path d="M6 5l5 5M11 5l-5 5" stroke="#c02020"/><path d="M9 10l8 6-4 0-1 3z" fill="#fff" stroke="#333"/></symbol>
<symbol id="pfil" viewBox="0 0 20 20"><path d="M1 3h15l-5 7v8l-4-2v-6z" fill="#4d8ac4" stroke="#1f4a7a"/><path d="M17 5l-3 7h2l-2 6 5-8h-2l2-5z" fill="#f2c21c" stroke="#8a6a20" stroke-width=".5"/></symbol>
<symbol id="win" viewBox="0 0 16 16"><path d="M1 1h14v14H1z" fill="#fff" stroke="#2f6e78"/><path d="M3 10l4-8 4 8" fill="none" stroke="#2f6e78" stroke-width="1.300"/><path d="M8 8h6v6H8z" fill="#dfeeee" stroke="#2f6e78"/><path d="M1 11h7" stroke="#2f6e78"/></symbol>
<symbol id="doc" viewBox="0 0 14 14"><path d="M0 0h14v14H0z" fill="#3d78b8"/><path d="M7 2v10M2 7h10" stroke="#fff" stroke-width="2"/><path d="M3 3h3v3H3z" fill="#dd6"/></symbol>
<symbol id="xp" viewBox="0 0 16 16"><path d="M2 3q3-2 6 0v5q-3-2-6 0z" fill="#d2452a"/><path d="M9 3q3 2 6 0v5q-3 2-6 0z" fill="#3a9a3a"/><path d="M2 9q3-2 6 0v5q-3-2-6 0z" fill="#3a6ac0"/><path d="M9 9q3 2 6 0v5q-3 2-6 0z" fill="#f0b820"/></symbol>
<symbol id="ie" viewBox="0 0 16 16"><circle cx="8" cy="8" r="6" fill="none" stroke="#2b78d8" stroke-width="3"/><path d="M3 8h11" stroke="#2b78d8" stroke-width="2"/><path d="M1 13Q8 0 15 2" stroke="#e9b62c" fill="none"/></symbol>
<symbol id="qa" viewBox="0 0 16 16"><path d="M2 2h9l3 3v9H2z" fill="#bcd4ec" stroke="#3a6cae"/><text x="5" y="12" font-size="10" font-family="Liberation Sans" font-weight="700" fill="#2b5c9e">e</text></symbol>
<symbol id="qb" viewBox="0 0 16 16"><path d="M1 4h5l2 2h7v8H1z" fill="#efd788" stroke="#907838"/><path d="M5 2h7v6H5z" fill="#fff" stroke="#999"/></symbol>
<symbol id="qc" viewBox="0 0 16 16"><circle cx="8" cy="8" r="7" fill="#222"/><circle cx="8" cy="8" r="5" fill="#f2c21c"/><path d="M3 8a5 5 0 0 1 5-5v5z" fill="#3a9a3a"/><path d="M13 8a5 5 0 0 1-5 5V8z" fill="#d2452a"/><circle cx="8" cy="8" r="2.500" fill="#fff"/><path d="M7 6.500l3 1.500-3 1.500z" fill="#222"/></symbol>
<symbol id="acr" viewBox="0 0 16 16"><path d="M1 1h14v14H1z" fill="#eee" stroke="#aaa"/><path d="M8 2L3 14l5-3 5 3z" fill="#d03030"/></symbol>
<symbol id="kd" viewBox="0 0 18 18"><path d="M4 3q6-2 6 2" stroke="#333" fill="none"/><path d="M1 6h16v10H1z" fill="#eee" stroke="#333"/><path d="M3 8h12M3 10h12M3 12h12M5 14h8" stroke="#333" stroke-dasharray="1 1"/></symbol>
<symbol id="kw" viewBox="0 0 16 16"><path d="M6 2h8v9H6z" fill="#59c" stroke="#224"/><path d="M2 5h8v9H2z" fill="#3a6aa8" stroke="#224"/></symbol>
<symbol id="kk" viewBox="0 0 16 16"><path d="M2 1h4v14H2z" fill="#e21"/><path d="M6 7l7-6h2L9 8l6 7-4 0z" fill="#e21"/><path d="M9 9l5 5-6 1z" fill="#111"/></symbol>
<symbol id="kn" viewBox="0 0 16 16"><path d="M1 14V5l5-4 5 4v9z" fill="#c8a01c" stroke="#665"/><circle cx="6" cy="6" r="3" fill="#6fd0e8"/><circle cx="11.500" cy="11.500" r="4" fill="#d02020"/><path d="M9 11.500h5" stroke="#fff" stroke-width="1.500"/></symbol>
<symbol id="kg" viewBox="0 0 16 16"><circle cx="8" cy="8" r="7" fill="#3a78c8" stroke="#224"/><path d="M3 6q5 3 10-1M4 12q4-3 8 0M8 1v14" stroke="#bde" fill="none"/></symbol>
<symbol id="padlock" viewBox="0 0 20 20"><path d="M11 8V5q0-3 3-3t3 3v2" fill="none" stroke="#b89020" stroke-width="2"/><path d="M3 9h11v8H3z" fill="#d8b820" stroke="#6a5a10"/><path d="M3 14h11v3H3z" fill="#a88010"/></symbol>
<symbol id="tfirst" viewBox="0 0 12 12"><path d="M2 2v8" stroke="#000" stroke-width="1.500"/><path d="M10 2v8L4 6z" fill="#000"/></symbol>
<symbol id="tprev" viewBox="0 0 12 12"><path d="M8 2v8L3 6z" fill="#000"/></symbol>
<symbol id="tnext" viewBox="0 0 12 12"><path d="M4 2v8l5-4z" fill="#000"/></symbol>
<symbol id="tlast" viewBox="0 0 12 12"><path d="M10 2v8" stroke="#000" stroke-width="1.500"/><path d="M2 2v8l6-4z" fill="#000"/></symbol>
</defs>
</svg>

<div class="screen">
  <div class="desk"></div>
  <div class="frame">
    <div class="titlebar">
      <svg class="tico"><use href="#win"/></svg>
      <span class="ttext">AutoCAD 2006 - [E:\Drawing1.dwg]</span>
      <span class="wbtns"><span class="wb">_</span><span class="wb sq"></span><span class="wb wbx">×</span></span>
    </div>
    <div class="menubar">
      <svg class="mico"><use href="#doc"/></svg>
      <span class="mi">文件<span class="k">(F)</span></span>
      <span class="mi">编辑<span class="k">(E)</span></span>
      <span class="mi">视图<span class="k">(V)</span></span>
      <span class="mi">插入<span class="k">(I)</span></span>
      <span class="mi">格式<span class="k">(O)</span></span>
      <span class="mi">工具<span class="k">(T)</span></span>
      <span class="mi">绘图<span class="k">(D)</span></span>
      <span class="mi">标注<span class="k">(N)</span></span>
      <span class="mi">修改<span class="k">(M)</span></span>
      <span class="mi xp">Express</span>
      <span class="mi">燕秀工具箱<span class="k">(Y)</span></span>
      <span class="mi">窗口<span class="k">(W)</span></span>
      <span class="mi">帮助<span class="k">(H)</span></span>
      <span class="wbtns"><span class="wb">_</span><span class="wb sq2"></span><span class="wb wbx">×</span></span>
    </div>

    <div class="tbrow r1">
      <div class="tb t1">
        <i class="grip"></i>
        <b class="b"><svg><use href="#new"/></svg></b><b class="b"><svg><use href="#open"/></svg></b><b class="b"><svg><use href="#save"/></svg></b><i class="sep"></i>
        <b class="b"><svg><use href="#print"/></svg></b><b class="b"><svg><use href="#preview"/></svg></b><b class="b"><svg><use href="#publish"/></svg></b><i class="sep"></i>
        <b class="b"><svg><use href="#cut"/></svg></b><b class="b"><svg><use href="#copy"/></svg></b><b class="b"><svg><use href="#paste"/></svg></b><b class="b"><svg><use href="#brush"/></svg></b><b class="b"><svg><use href="#match"/></svg></b><i class="sep"></i>
        <b class="b"><svg><use href="#undo"/></svg></b><b class="bn"><svg><use href="#down"/></svg></b><b class="b"><svg><use href="#redo"/></svg></b><b class="bn"><svg><use href="#downg"/></svg></b><i class="sep"></i>
        <b class="b"><svg><use href="#pan"/></svg></b><b class="b"><svg><use href="#zrt"/></svg></b><b class="b"><svg><use href="#zw"/></svg></b><b class="b"><svg><use href="#zp"/></svg></b><i class="sep"></i>
        <b class="b"><svg><use href="#col"/></svg></b><b class="b"><svg><use href="#grd"/></svg></b><b class="b"><svg><use href="#dc"/></svg></b><b class="b"><svg><use href="#tool"/></svg></b><b class="b"><svg><use href="#sheet"/></svg></b><b class="b"><svg><use href="#calc"/></svg></b><i class="sep"></i>
        <b class="b"><svg><use href="#help"/></svg></b>
      </div>
      <div class="tb t1b">
        <i class="grip"></i>
        <b class="b"><svg><use href="#dl"/></svg></b><b class="b"><svg><use href="#da"/></svg></b><b class="b"><svg><use href="#darc"/></svg></b><b class="b"><svg><use href="#dord"/></svg></b><i class="sep"></i>
        <b class="b"><svg><use href="#drad"/></svg></b><b class="b"><svg><use href="#djog"/></svg></b><b class="b"><svg><use href="#ddia"/></svg></b><b class="b"><svg><use href="#dang"/></svg></b><i class="sep"></i>
        <b class="b"><svg><use href="#dq"/></svg></b><b class="b"><svg><use href="#dbase"/></svg></b><b class="b"><svg><use href="#dcon"/></svg></b><i class="sep"></i>
        <b class="b"><svg><use href="#lead"/></svg></b><b class="b"><svg><use href="#tol"/></svg></b><b class="b"><svg><use href="#center"/></svg></b><i class="sep"></i>
        <b class="b"><svg><use href="#dstyle"/></svg></b>
      </div>
    </div>

    <div class="tbrow r2">
      <div class="tb t2">
        <i class="grip"></i>
        <b class="b"><svg><use href="#layers"/></svg></b>
        <span class="combo c-layer">
          <svg class="m1"><use href="#bulb"/></svg><svg class="m1"><use href="#sun"/></svg><svg class="m1"><use href="#gear"/></svg><svg class="m1"><use href="#lock"/></svg><i class="sw"></i><span class="cv">0</span>
          <span class="arr"></span>
        </span>
        <b class="b"><svg><use href="#layprev"/></svg></b><b class="b"><svg><use href="#layun"/></svg></b>
      </div>
      <div class="tb t2b">
        <i class="grip g2"></i>
        <span class="combo c-color"><i class="sw"></i><span class="cv">ByLayer</span><span class="arr"></span></span>
        <i class="grip g2"></i>
        <span class="combo c-lt"><i class="ln"></i><span class="cv">ByLayer</span><span class="arr"></span></span>
        <i class="grip g2"></i>
        <span class="combo c-lw"><i class="ln short"></i><span class="cv">ByLayer</span><span class="arr"></span></span>
        <i class="grip g2"></i>
        <span class="combo c-ps"><span class="cvd">随颜色</span><span class="arr dis"></span></span>
      </div>
    </div>

    <div class="mid">
      <div class="work">
        <div class="workTop">
          <div class="drawCol">
            <svg class="canvas" viewBox="5 101 747 476" width="747" height="476">
              <rect x="5" y="101" width="747" height="476" fill="#000"/>
              <use href="#hook"/>
              <use href="#hook" y="231"/>
              <use href="#hookfront"/>
              <g stroke="#fff" fill="none" shape-rendering="crispEdges">
                <path d="M272.500 105V128M272.500 170V322M218 250.500H358M279.500 243v8M274 259.500h12M279.500 253v12"/>
                <path d="M272.500 336V359M272.500 400V552M218 481.500H358M279.500 474v8M274 490.500h12M279.500 484v12"/>
                <path d="M568.500 105V322M513 250.500H653"/>
                <path d="M5 194.500H752M592.500 101V577"/>
                <path d="M587.500 189.500h10v10h-10zM592.500 187v14M586 194.500h14" stroke-width="1"/>
              </g>
              <path d="M262 194.500H293M554 194.500H582" stroke="#000" shape-rendering="crispEdges"/>
              <path d="M44 538V514" stroke="#2dd42d" stroke-width="2"/>
              <path d="M44 502l6 14H38z" fill="#1fe01f"/>
              <path d="M44 538.500H72" stroke="#ff2020" stroke-width="2"/>
              <path d="M82 538.500l-14-5v10z" fill="#f01010"/>
              <circle cx="44" cy="538" r="5" fill="#1f70c8"/>
              <text class="ua ug" x="45" y="502">Y</text>
              <text class="ua ur" x="78" y="535">X</text>
              <text class="ua ub" x="45" y="535">Z</text>
            </svg>
            <div class="tabs">
              <span class="tn"><svg><use href="#tfirst"/></svg></span><span class="tn"><svg><use href="#tprev"/></svg></span><span class="tn"><svg><use href="#tnext"/></svg></span><span class="tn"><svg><use href="#tlast"/></svg></span>
              <span class="tab act">模型</span><span class="tab">布局<span class="td">1</span></span><span class="tab">布局<span class="td">2</span></span>
            </div>
          </div>
          <div class="vbars">
            <div class="vb">
              <i class="vgrip"></i>
              <b class="vi"><svg><use href="#vline"/></svg></b><b class="vi"><svg><use href="#vxline"/></svg></b><b class="vi"><svg><use href="#vpl"/></svg></b><b class="vi"><svg><use href="#vpoly"/></svg></b><b class="vi"><svg><use href="#vrect"/></svg></b><b class="vi"><svg><use href="#varc"/></svg></b><b class="vi"><svg><use href="#vcir"/></svg></b><b class="vi"><svg><use href="#vrev"/></svg></b><b class="vi"><svg><use href="#vspl"/></svg></b><b class="vi"><svg><use href="#vell"/></svg></b><b class="vi"><svg><use href="#vella"/></svg></b><b class="vi"><svg><use href="#vins"/></svg></b><b class="vi"><svg><use href="#vblk"/></svg></b><b class="vi"><svg><use href="#vpt"/></svg></b><b class="vi"><svg><use href="#vhat"/></svg></b><b class="vi"><svg><use href="#vgrd"/></svg></b><b class="vi"><svg><use href="#vreg"/></svg></b><b class="vi"><svg><use href="#vtbl"/></svg></b><b class="vi vA">A</b>
            </div>
            <div class="vb">
              <i class="vgrip"></i>
              <b class="vi"><svg><use href="#verase"/></svg></b><b class="vi"><svg><use href="#vcopy"/></svg></b><b class="vi"><svg><use href="#vmir"/></svg></b><b class="vi"><svg><use href="#voff"/></svg></b><b class="vi"><svg><use href="#varr"/></svg></b><b class="vi"><svg><use href="#vmov"/></svg></b><b class="vi"><svg><use href="#vrot"/></svg></b><b class="vi"><svg><use href="#vscl"/></svg></b><b class="vi"><svg><use href="#vstr"/></svg></b><b class="vi"><svg><use href="#vtrm"/></svg></b><b class="vi"><svg><use href="#vext"/></svg></b><b class="vi"><svg><use href="#vbrk"/></svg></b><b class="vi"><svg><use href="#vbr2"/></svg></b><b class="vi"><svg><use href="#vjoin"/></svg></b><b class="vi"><svg><use href="#vcha"/></svg></b><b class="vi"><svg><use href="#vfil"/></svg></b><b class="vi"><svg><use href="#vexp"/></svg></b>
            </div>
            <div class="vb">
              <i class="vgrip"></i>
              <b class="vi"><svg><use href="#d1"/></svg></b><b class="vi"><svg><use href="#d2"/></svg></b><b class="vi"><svg><use href="#d3"/></svg></b><b class="vi"><svg><use href="#d4"/></svg></b>
            </div>
          </div>
        </div>
        <div class="tbrow r3">
          <div class="tb t3">
            <i class="grip"></i>
            <b class="b"><svg><use href="#u1"/></svg></b><b class="b"><svg><use href="#u2"/></svg></b><i class="sep"></i>
            <b class="b"><svg><use href="#u3"/></svg></b><i class="sep"></i>
            <b class="b"><svg><use href="#u4"/></svg></b><b class="b"><svg><use href="#u5"/></svg></b><b class="b"><svg><use href="#u6"/></svg></b><b class="b"><svg><use href="#u7"/></svg></b><i class="sep"></i>
            <b class="b"><svg><use href="#u8"/></svg></b><b class="b"><svg><use href="#u9"/></svg></b><b class="b"><svg><use href="#u10"/></svg></b><i class="sep"></i>
            <b class="b"><svg><use href="#ux"/></svg></b><b class="b"><svg><use href="#uy"/></svg></b><b class="b"><svg><use href="#uz"/></svg></b><i class="sep"></i>
            <b class="b"><svg><use href="#umgr"/></svg></b>
          </div>
          <div class="tb t3b">
            <i class="grip"></i>
            <b class="b"><svg><use href="#vmgr"/></svg></b><i class="sep"></i>
            <b class="b"><svg><use href="#vtop"/></svg></b><b class="b"><svg><use href="#vbot"/></svg></b><b class="b"><svg><use href="#vl"/></svg></b><b class="b"><svg><use href="#vr"/></svg></b><b class="b"><svg><use href="#vf"/></svg></b><b class="b"><svg><use href="#vk"/></svg></b><i class="sep"></i>
            <b class="b"><svg><use href="#v3d"/></svg></b><b class="b"><svg><use href="#v3e"/></svg></b><b class="b"><svg><use href="#v3f"/></svg></b><b class="b"><svg><use href="#v3g"/></svg></b><i class="sep"></i>
            <b class="b"><svg><use href="#cam"/></svg></b><i class="sep"></i>
            <span class="combo c-view"><span class="arr dis"></span></span>
          </div>
        </div>
        <div class="tbrow r1">
          <div class="tb t4">
            <i class="grip"></i>
            <b class="b"><svg><use href="#hide"/></svg></b><b class="b"><svg><use href="#sh2"/></svg></b><b class="b"><svg><use href="#sh3"/></svg></b><b class="b"><svg><use href="#sh4"/></svg></b><b class="b"><svg><use href="#sh5"/></svg></b><b class="b"><svg><use href="#sh6"/></svg></b><b class="b"><svg><use href="#sh7"/></svg></b>
          </div>
          <div class="tb t4b">
            <i class="grip"></i>
            <b class="b"><svg><use href="#pan"/></svg></b><b class="b"><svg><use href="#zrt"/></svg></b><b class="b"><svg><use href="#orb1"/></svg></b><b class="b"><svg><use href="#orb2"/></svg></b><b class="b"><svg><use href="#cam2"/></svg></b><b class="b"><svg><use href="#cam3"/></svg></b><b class="b"><svg><use href="#sw"/></svg></b><b class="b"><svg><use href="#erase"/></svg></b><b class="b"><svg><use href="#surf"/></svg></b><i class="sep"></i>
            <span class="combo c-style"><span class="arr"></span></span>
          </div>
        </div>
      </div>

      <aside class="palette">
        <div class="phead"><i class="pline"></i><span class="wb wbs">×</span></div>
        <div class="ptools">
          <span class="combo c-sel"><span class="psel">无选择</span><span class="arr"></span></span>
          <span class="ptbtn"><svg><use href="#psel"/></svg><svg><use href="#pcur"/></svg><svg><use href="#pfil"/></svg></span>
        </div>
        <section class="sec">
          <h3 class="sh">基本<svg class="chev"><use href="#chev"/></svg></h3>
          <div class="row"><span class="lb">颜色</span><span class="vl wh"><i class="sw"></i>&nbsp;<span class="k10">ByLayer</span></span></div>
          <div class="row"><span class="lb">图层</span><span class="vl wh"><span class="k10">0</span></span></div>
          <div class="row"><span class="lb">线型</span><span class="vl wh"><i class="ln2"></i><span class="k10">ByLayer</span></span></div>
          <div class="row"><span class="lb">线型<span class="k10">...</span></span><span class="vl wh"><span class="k10">1</span></span></div>
          <div class="row"><span class="lb">线宽</span><span class="vl wh"><i class="ln2"></i><span class="k10">ByLayer</span></span></div>
          <div class="row"><span class="lb">厚度</span><span class="vl wh"><span class="k10">0</span></span></div>
        </section>
        <section class="sec">
          <h3 class="sh">打印样式<svg class="chev"><use href="#chev"/></svg></h3>
          <div class="row"><span class="lb">打印<span class="k10">...</span></span><span class="vl">随颜色</span></div>
          <div class="row"><span class="lb">打印<span class="k10">...</span></span><span class="vl wh">无</span></div>
          <div class="row"><span class="lb">打印<span class="k10">...</span></span><span class="vl">模型</span></div>
          <div class="row"><span class="lb">打印<span class="k10">...</span></span><span class="vl">不可用</span></div>
        </section>
        <section class="sec">
          <h3 class="sh">视图<svg class="chev"><use href="#chev"/></svg></h3>
          <div class="row"><span class="lb">圆心<span class="k10">...</span></span><span class="vl"><span class="k10">375.2071</span></span></div>
          <div class="row"><span class="lb">圆心<span class="k10">...</span></span><span class="vl"><span class="k10">320.459</span></span></div>
          <div class="row"><span class="lb">圆心<span class="k10">...</span></span><span class="vl"><span class="k10">0</span></span></div>
          <div class="row"><span class="lb">高度</span><span class="vl"><span class="k10">649.0138</span></span></div>
          <div class="row"><span class="lb">宽度</span><span class="vl"><span class="k10">1020.0744</span></span></div>
        </section>
        <section class="sec">
          <h3 class="sh">其他<svg class="chev"><use href="#chev"/></svg></h3>
          <div class="row"><span class="lb">打开<span class="k10">...</span></span><span class="vl wh">是</span></div>
          <div class="row"><span class="lb">在原<span class="k10">...</span></span><span class="vl wh">是</span></div>
          <div class="row"><span class="lb">每个<span class="k10">...</span></span><span class="vl wh">是</span></div>
          <div class="row"><span class="lb"><span class="k10">UCS ...</span></span><span class="vl"><span class="k10">*</span>俯视<span class="k10">*</span></span></div>
        </section>
        <div class="pdesc"></div>
      </aside>
    </div>

    <div class="cmd">
      <i class="cgrip"></i>
      <div class="cbody">
        <div class="cout">
          <div class="cl">指定窗口的角点, 输入比例因子 <span class="ck">(nX</span> 或 <span class="ck">nXP)</span>, 或者</div>
          <div class="cl"><span class="ck">[</span>全部<span class="ck">(A)/</span>中心<span class="ck">(C)/</span>动态<span class="ck">(D)/</span>范围<span class="ck">(E)/</span>上一个<span class="ck">(P)/</span>比例<span class="ck">(S)/</span>窗口<span class="ck">(W)/</span>对象<span class="ck">(O)] &lt;</span>实时<span class="ck">&gt;: a</span></div>
        </div>
        <div class="cin"><span class="cl">命令<span class="ck">:</span></span>
          <span class="hs"><span class="sb">◂</span><span class="sthumb"></span><span class="strack"></span><span class="sb">▸</span></span>
        </div>
      </div>
      <div class="vs"><span class="sb">▴</span><span class="sb">▾</span></div>
    </div>

    <div class="status">
      <span class="coords">21.6658,&nbsp;&nbsp;&nbsp;618.3112, 0.0000</span>
      <span class="sbtn">捕捉</span><span class="sbtn">栅格</span><span class="sbtn on">正交</span><span class="sbtn">极轴</span><span class="sbtn on wide">对象捕捉</span><span class="sbtn on wide">对象追踪</span><span class="sbtn dyn">DYN</span><span class="sbtn">线宽</span><span class="sbtn on">模型</span>
      <span class="sright"><span class="lockb"><svg><use href="#padlock"/></svg></span><span class="sdown"></span><i class="rgrip"></i></span>
    </div>
  </div>

  <div class="taskbar">
    <span class="start"><svg><use href="#xp"/></svg>开始</span>
    <i class="tsep"></i>
    <span class="ql"><svg><use href="#ie"/></svg><svg><use href="#qa"/></svg><svg><use href="#qb"/></svg><svg><use href="#qc"/></svg></span>
    <span class="more">»</span>
    <i class="tsep ts2"></i>
    <span class="task act"><svg><use href="#win"/></svg><span class="k10b">AutoCAD 2006 - [E:\...</span></span>
    <span class="task"><svg><use href="#kn"/></svg>金山词霸<span class="k10b">2007</span>(暂停<span class="k10b">...</span></span>
    <span class="task"><svg><use href="#acr"/></svg><span class="k10b">AutoCAD 2009 - [Dra...</span></span>
    <span class="tr">
      <i class="tsep"></i>
      <svg class="kbd"><use href="#kd"/></svg>
      <span class="tray">
        <span class="lt">«</span><svg><use href="#kw"/></svg><svg><use href="#kk"/></svg><svg><use href="#kn"/></svg><svg><use href="#kg"/></svg>
        <span class="clock">19:03</span>
      </span>
    </span>
  </div>
</div>
</body>
</html>
```

FILE: styles.css
```css
* { box-sizing: border-box; }
html, body { margin: 0; padding: 0; background: #d4d0c8; }
.defs { display: block; height: 0; overflow: hidden; }
b, i { font-weight: normal; font-style: normal; }
body { font: 12px/16px "Noto Sans CJK SC", "Liberation Sans", sans-serif; color: #000; }
.screen { width: 1024px; height: 768px; display: flex; flex-direction: column; overflow: hidden; background: #d4d0c8; }
.desk { height: 3px; background: #3a6ea5; flex: none; }
.frame { height: 735px; flex: none; border-top: 1px solid #fff; border-bottom: 1px solid #404040; padding: 2px 4px 0 4px; display: flex; flex-direction: column; border-left: 1px solid #fff; border-right: 1px solid #808080; }
.k { font: 10px/16px "Liberation Mono", monospace; }
.k10 { font: 10px/16px "Liberation Mono", monospace; }
.k10b { font: 10px/16px "Liberation Mono", monospace; letter-spacing: .15px; }

.titlebar { height: 18px; flex: none; margin: 0 -1px 0 -1px; display: flex; align-items: center; background: linear-gradient(90deg, #0a246a, #a6caf0); color: #fff; }
.tico { width: 16px; height: 16px; margin: 0 2px 0 2px; flex: none; }
.ttext { font: bold 11.600px/16px "Liberation Mono", monospace; padding-top: 1px; }
.wbtns { margin-left: auto; display: flex; gap: 0; padding-right: 2px; }
.wb { width: 16px; height: 14px; background: #d4d0c8; box-shadow: inset -1px -1px #404040, inset 1px 1px #fff; color: #000; font: bold 12px/11px "Liberation Sans", sans-serif; text-align: center; display: block; }
.wb + .wb { margin-left: 2px; }
.wb.sq { position: relative; }
.wb.sq::after { content: ""; position: absolute; left: 3px; top: 2px; width: 9px; height: 9px; border: 1px solid #000; border-top-width: 2px; }
.wb.sq2 { position: relative; }
.wb.sq2::after { content: ""; position: absolute; left: 5px; top: 2px; width: 7px; height: 6px; border: 1px solid #000; border-top-width: 2px; }
.wb.sq2::before { content: ""; position: absolute; left: 3px; top: 5px; width: 6px; height: 6px; border: 1px solid #000; background: #d4d0c8; border-top-width: 2px; z-index: 1; }
.wbx { font-size: 13px; line-height: 13px; }

.menubar { height: 20px; flex: none; display: flex; align-items: center; margin-left: 0; }
.mico { width: 14px; height: 14px; margin: 0 0 0 4px; flex: none; }
.mi { padding: 0 6px; white-space: nowrap; }
.mi.xp { font: 10px/16px "Liberation Mono", monospace; }

.tbrow { height: 28px; flex: none; display: flex; align-items: stretch; }
.tb { display: flex; align-items: center; box-shadow: inset 1px 1px #fff, inset -1px -1px #808080; height: 28px; padding-left: 1px; margin-left: 1px; }
.r1 .tb { padding-top: 2px; }
.r3 .tb { padding-top: 4px; }
.t1 { width: 630px; }
.t1b { width: 383px; margin-left: 0; }
.t2 { width: 384px; }
.t2b { width: 590px; padding-left: 3px; margin-left: 2px; }
.t2 .b { margin-top: 2px; }
.grip { display: block; width: 8px; height: 22px; border-left: 1px solid #808080; border-right: 1px solid #808080; background: linear-gradient(90deg, #fff 0 2px, #d4d0c8 2px 4px, #fff 4px); flex: none; margin-right: 1px; }
.g2 { margin: 0 2px 0 3px; width: 4px; background: #fff; }
.b { width: 23px; height: 24px; flex: none; display: flex; align-items: center; justify-content: center; }
.b svg { width: 20px; height: 20px; display: block; }
.bn { width: 13px; height: 24px; flex: none; display: flex; align-items: center; justify-content: center; }
.bn svg { width: 16px; height: 20px; flex: none; }
.sep { display: block; width: 2px; height: 22px; margin: 0 2px; background: linear-gradient(90deg, #808080 50%, #fff 50%); flex: none; }

.combo { display: flex; align-items: center; background: #fff; height: 21px; box-shadow: inset 1px 1px #404040, inset -1px -1px #fff, inset 2px 2px #808080, inset -2px -2px #d4d0c8; padding: 2px 3px 0; position: relative; flex: none; font: 10px/16px "Liberation Mono", monospace; }
.arr { position: absolute; right: 2px; top: 2px; bottom: 2px; width: 15px; background: #d4d0c8; box-shadow: inset -1px -1px #404040, inset 1px 1px #fff; display: flex; align-items: center; justify-content: center; }
.arr::after { content: ""; border: 4px solid transparent; border-top: 4px solid #000; border-bottom: 0; }
.arr.dis::after { border-top-color: #888; }
.c-layer { width: 298px; padding-left: 2px; margin: 0 0 0 2px; }
.c-layer svg.m1 { width: 16px; height: 16px; margin-right: 1px; }
.c-layer .sw { margin-left: 4px; }
.sw { display: inline-block; width: 9px; height: 9px; border: 1px solid #000; background: #fff; flex: none; }
.cv { margin-left: 5px; }
.c-color { width: 148px; padding-left: 7px; }
.c-color .cv { margin-left: 3px; }
.c-lt { width: 158px; padding-left: 4px; }
.c-lw { width: 122px; padding-left: 4px; }
.c-ps { width: 118px; background: #d4d0c8; padding-left: 10px; }
.cvd { font: 12px/16px "Noto Sans CJK SC", sans-serif; color: #8e8b85; }
.ln { display: block; height: 1px; background: #000; width: 60px; }
.ln.short { width: 34px; }
.c-lt .cv { margin-left: 4px; }
.c-lw .cv { margin-left: 5px; }

.mid { flex: 1; min-height: 0; display: flex; margin-top: 0; }
.work { width: 831px; flex: none; display: flex; flex-direction: column; }
.workTop { height: 494px; flex: none; display: flex; }
.drawCol { width: 748px; display: flex; flex-direction: column; flex: none; border-right: 1px solid #fff; }
.canvas { display: block; margin-top: 1px; flex: none; }
.ua { font: 12px "Liberation Sans", sans-serif; }
.ug { fill: #2dd42d; }
.ur { fill: #c02020; }
.ub { fill: #3868c8; }
.tabs { height: 15px; flex: none; display: flex; align-items: center; padding-left: 2px; }
.tn { width: 15px; height: 13px; box-shadow: inset -1px -1px #808080, inset 1px 1px #fff; display: flex; align-items: center; justify-content: center; flex: none; margin-right: 1.500px; }
.tn svg { width: 11px; height: 11px; }
.tab { height: 15px; padding: 0 6px; position: relative; z-index: 0; flex: none; font: 12px/15px "Noto Sans CJK SC", sans-serif; }
.tab::before { content: ""; position: absolute; inset: 0; z-index: -1; transform: skewX(-20deg); border-left: 1px solid #000; border-right: 1px solid #000; }
.tab.act { color: #fff; margin-left: 9px; }
.tab.act::before { background: #000; }
.td { font: 11.700px/15px "Liberation Mono", monospace; }
.vbars { flex: 1; display: flex; gap: 1px; padding: 2px 0 0 1px; align-items: flex-start; }
.vb { width: 25px; box-shadow: inset 1px 1px #fff, inset -1px -1px #808080; display: flex; flex-direction: column; align-items: center; padding-bottom: 6px; flex: none; }
.vgrip { display: block; width: 21px; height: 8px; border-top: 1px solid #808080; border-bottom: 1px solid #808080; background: linear-gradient(#fff 0 2px, #d4d0c8 2px 4px, #fff 4px); margin-bottom: 1px; flex: none; }
.vi { width: 24px; height: 22px; display: flex; align-items: center; justify-content: center; flex: none; }
.vi svg { width: 20px; height: 20px; display: block; }
.vA { font: 20px/22px "Liberation Sans", sans-serif; }
.t3 { width: 371px; }
.t3b { width: 460px; margin-left: 0; }
.t4 { width: 178px; }
.t4b { width: 362px; margin-left: 1px; }
.c-view { width: 141px; margin-left: 2px; background: #d4d0c8; }
.c-style { width: 138px; margin-left: 2px; }

.palette { flex: 1; min-width: 0; background: #ecebe8; border-left: 2px solid #202020; box-shadow: inset 1px 0 #fff, inset -1px 0 #808080; padding: 0 0 0 13px; display: flex; flex-direction: column; }
.phead { height: 22px; display: flex; align-items: center; flex: none; margin-left: -5px; padding-right: 5px; }
.pline { display: block; flex: 1; height: 5px; border: 1px solid #999; border-width: 1px 1px 1px 0; margin-right: 4px; }
.wbs { width: 14px; height: 13px; font-size: 12px; line-height: 12px; }
.ptools { height: 25px; display: flex; gap: 8px; align-items: center; margin: 1px 0 11px -2px; flex: none; }
.c-sel { width: 80px; height: 24px; font: 12px/16px "Noto Sans CJK SC", sans-serif; padding-top: 0; }
.c-sel .arr { width: 16px; }
.ptbtn { width: 72px; height: 24px; display: flex; background: #dedcd7; align-items: center; justify-content: space-around; box-shadow: inset 1px 1px #fff, inset -1px -1px #b0aea8; }
.ptbtn svg { width: 20px; height: 20px; }
.sec { margin: 0 0 8.400px 0; width: 151px; flex: none; }
.sh { margin: 0; height: 16px; background: #bdbab2; border-radius: 8px 8px 0 0; color: #fff; font: bold 12px/16px "Noto Sans CJK SC", sans-serif; padding-left: 6px; position: relative; display: flex; justify-content: space-between; align-items: center; padding-right: 10px; }
.chev { width: 12px; height: 11px; flex: none; }
.row { display: flex; height: 16px; margin-left: 16px; border-bottom: 1px solid #b4b2ac; border-left: 1px solid #b4b2ac; border-right: 1px solid #b4b2ac; font: 12px/16px "Noto Sans CJK SC", sans-serif; white-space: nowrap; }
.lb { width: 49px; padding-left: 3px; border-right: 1px solid #b4b2ac; flex: none; color: #222; }
.vl { flex: 1; padding-left: 1px; display: flex; align-items: center; min-width: 0; overflow: hidden; }
.vl.wh { background: #fff; }
.ln2 { display: block; width: 32px; height: 1px; background: #000; margin: 0 5px 0 4px; flex: none; }
.vl .sw { margin-left: 2px; }
.pdesc { width: 152px; height: 32px; margin: auto 0 12px 0; border: 1px solid #c8c6c0; flex: none; }

.cmd { height: 54px; flex: none; margin-top: 4px; border-top: 2px solid #202020; display: flex; padding: 5px 9px 0 5px; position: relative; }
.cgrip { display: block; width: 8px; height: 47px; border-left: 1px solid #808080; border-right: 1px solid #808080; background: linear-gradient(90deg, #fff 0 2px, #d4d0c8 2px 4px, #fff 4px); flex: none; margin-right: 2px; }
.cbody { flex: 1; background: #fff; display: flex; flex-direction: column; min-width: 0; box-shadow: inset 1px 1px #404040; font-size: 12px; }
.cout { height: 32px; padding: 2px 0 0 3px; border-bottom: 1px solid #808080; flex: none; }
.cl { font: 12px/13px "Noto Sans CJK SC", sans-serif; letter-spacing: 4px; white-space: nowrap; height: 13px; display: block; }
.ck { font: 11px/13px "Liberation Mono", monospace; letter-spacing: 1.400px; }
.cin { flex: 1; display: flex; align-items: center; justify-content: space-between; padding-left: 3px; border-bottom: 1px solid #bbb; }
.hs { display: flex; align-self: stretch; width: 61px; background: #d4d0c8; flex: none; }
.sb { display: block; width: 15px; height: 15px; background: #d4d0c8; box-shadow: inset -1px -1px #808080, inset 1px 1px #fff; font: 10px/14px "DejaVu Sans", sans-serif; text-align: center; flex: none; }
.sthumb { width: 16px; box-shadow: inset -1px -1px #808080, inset 1px 1px #fff; flex: none; }
.strack { flex: 1; background: repeating-conic-gradient(#fff 0 25%, #d4d0c8 0 50%) 0 0 / 2px 2px; }
.vs { width: 15px; flex: none; display: flex; flex-direction: column; margin-left: 2px; }

.status { height: 29px; flex: none; display: flex; align-items: center; padding-left: 3px; border-top: 1px solid #fff; margin-top: 0; }
.coords { width: 251px; height: 20px; margin-right: 5px; box-shadow: inset 1px 1px #808080, inset -1px -1px #fff; font: 10px/20px "Liberation Mono", monospace; letter-spacing: -.2px; color: #8a8882; padding-left: 2px; flex: none; white-space: nowrap; }
.sbtn { height: 21px; padding: 0 1px; margin-right: 5px; box-shadow: inset -1px -1px #808080, inset 1px 1px #fff; font: 12px/20px "Noto Sans CJK SC", sans-serif; flex: none; text-align: center; min-width: 27px; }
.sbtn.on { box-shadow: inset 1px 1px #404040, inset -1px -1px #fff; background: #e8e6e1; }
.sbtn.wide { width: 51px; }
.sbtn.dyn { font: 10px/20px "Liberation Mono", monospace; width: 23px; min-width: 0; padding: 0; }
.sright { margin-left: auto; display: flex; align-items: center; margin-right: -1px; }
.lockb { width: 24px; height: 20px; box-shadow: inset 1px 1px #808080, inset -1px -1px #fff; display: flex; align-items: center; justify-content: center; }
.lockb svg { width: 20px; height: 20px; }
.sdown { width: 0; height: 0; border: 4px solid transparent; border-top: 4px solid #000; border-bottom: 0; margin: 0 9px 0 5px; }
.rgrip { display: block; width: 12px; height: 12px; margin-top: 6px; background: repeating-linear-gradient(135deg, #d4d0c8 0 2px, #808080 2px 3px, #fff 3px 4px); clip-path: polygon(100% 0, 100% 100%, 0 100%); }

.taskbar { height: 30px; flex: none; border-top: 1px solid #fff; display: flex; align-items: center; padding: 0 2px 0 2px; }
.start { width: 47px; height: 21px; box-shadow: inset -1px -1px #404040, inset 1px 1px #fff; display: flex; align-items: center; font: 12px/20px "Noto Sans CJK SC", sans-serif; padding-left: 2px; flex: none; margin-left: 1px; }
.start svg { width: 17px; height: 16px; margin-right: 1px; }
.tsep { display: block; width: 2px; height: 20px; margin: 0 5px 0 6px; background: linear-gradient(90deg, #808080 50%, #fff 50%); flex: none; }
.tsep.ts2 { margin: 0 7px 0 3px; }
.ql { display: flex; gap: 7px; flex: none; width: 92px; margin-left: 2px; }
.ql svg { width: 16px; height: 16px; }
.more { width: 14px; font: bold 13px/16px "Liberation Sans", sans-serif; flex: none; margin-left: 22px; }
.task { width: 158px; height: 23px; margin-right: 4px; box-shadow: inset -1px -1px #404040, inset 1px 1px #fff; display: flex; align-items: center; padding-left: 5px; font: 12px/20px "Noto Sans CJK SC", sans-serif; white-space: nowrap; flex: none; }
.task svg { width: 16px; height: 16px; margin-right: 3px; flex: none; }
.task.act { box-shadow: inset 1px 1px #404040, inset -1px -1px #fff; background: repeating-conic-gradient(#fff 0 25%, #d4d0c8 0 50%) 0 0 / 2px 2px; }
.tr { margin-left: auto; display: flex; align-items: center; }
.kbd { width: 18px; height: 18px; margin-right: 3px; }
.tray { width: 133px; height: 23px; display: flex; align-items: center; box-shadow: inset 1px 1px #808080, inset -1px -1px #fff; padding: 0 8px 0 5px; gap: 2px; }
.tray svg { width: 16px; height: 16px; flex: none; }
.lt { font: bold 13px/14px "Liberation Sans", sans-serif; width: 9px; flex: none; }
.clock { margin-left: auto; font: 12px/16px "Liberation Sans", sans-serif; }
```
